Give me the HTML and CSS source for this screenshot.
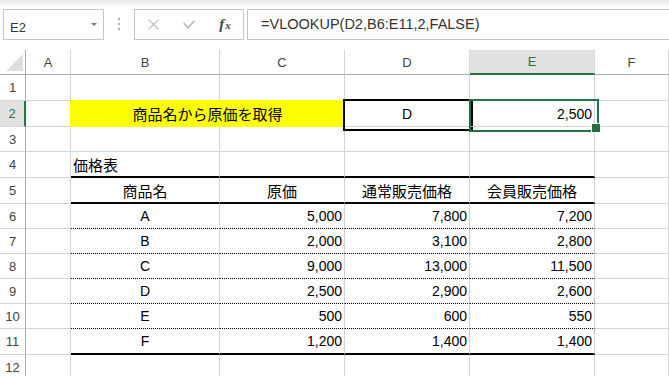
FILE: index.html
```html
<!DOCTYPE html>
<html lang="ja">
<head>
    <meta charset="UTF-8">
    <meta name="viewport" content="width=device-width, initial-scale=1.0">
    <title>VLOOKUP - 価格表</title>
    <link rel="stylesheet" href="styles.css">
</head>
<body>
    <div class="formula-bar">
        <div class="name-box">
            <span>E2</span>
            <span class="caret"></span>
        </div>
        <div class="grip">
            <span></span><span></span><span></span>
        </div>
        <div class="fx-buttons">
            <span class="slot">
                <svg width="11" height="11" viewBox="0 0 11 11"><path d="M0.6 0.6 L10.4 10.4 M10.4 0.6 L0.6 10.4" stroke="#bdbdbd" stroke-width="1.3" fill="none"/></svg>
            </span>
            <span class="slot">
                <svg width="12" height="9" viewBox="0 0 12 9"><path d="M0.7 3.2 L5 7.8 L11.4 0.8" stroke="#bdbdbd" stroke-width="1.8" fill="none"/></svg>
            </span>
            <span class="slot fx"><i>f</i><i class="x">x</i></span>
        </div>
        <div class="formula">=VLOOKUP(D2,B6:E11,2,FALSE)</div>
    </div>

    <div class="sheet">
        <div class="row">
            <div class="cell corner">
                <svg width="17" height="17" viewBox="0 0 17 17"><path d="M17 0 L17 17 L0 17 Z" fill="#dfdfdf"/></svg>
            </div>
            <div class="cell col-head">A</div>
            <div class="cell col-head">B</div>
            <div class="cell col-head">C</div>
            <div class="cell col-head">D</div>
            <div class="cell col-head active">E</div>
            <div class="cell col-head">F</div>
        </div>

        <div class="row tall">
            <div class="cell row-head">1</div>
            <div class="cell"></div><div class="cell"></div><div class="cell"></div>
            <div class="cell"></div><div class="cell"></div><div class="cell"></div>
        </div>

        <div class="row tall">
            <div class="cell row-head active">2</div>
            <div class="cell"></div>
            <div class="cell title ja">商品名から原価を取得</div>
            <div class="cell center lookup">D</div>
            <div class="cell num result">2,500</div>
            <div class="cell"></div>
        </div>

        <div class="row">
            <div class="cell row-head">3</div>
            <div class="cell"></div><div class="cell"></div><div class="cell"></div>
            <div class="cell"></div><div class="cell"></div><div class="cell"></div>
        </div>

        <div class="row tall">
            <div class="cell row-head">4</div>
            <div class="cell"></div>
            <div class="cell ja rule">価格表</div>
            <div class="cell rule"></div>
            <div class="cell rule"></div>
            <div class="cell rule"></div>
            <div class="cell"></div>
        </div>

        <div class="row tall">
            <div class="cell row-head">5</div>
            <div class="cell"></div>
            <div class="cell center ja rule">商品名</div>
            <div class="cell center ja rule">原価</div>
            <div class="cell center ja rule">通常販売価格</div>
            <div class="cell center ja rule">会員販売価格</div>
            <div class="cell"></div>
        </div>

        <div class="row">
            <div class="cell row-head">6</div>
            <div class="cell"></div>
            <div class="cell center dotted">A</div>
            <div class="cell num dotted">5,000</div>
            <div class="cell num dotted">7,800</div>
            <div class="cell num dotted">7,200</div>
            <div class="cell"></div>
        </div>

        <div class="row">
            <div class="cell row-head">7</div>
            <div class="cell"></div>
            <div class="cell center dotted">B</div>
            <div class="cell num dotted">2,000</div>
            <div class="cell num dotted">3,100</div>
            <div class="cell num dotted">2,800</div>
            <div class="cell"></div>
        </div>

        <div class="row">
            <div class="cell row-head">8</div>
            <div class="cell"></div>
            <div class="cell center dotted">C</div>
            <div class="cell num dotted">9,000</div>
            <div class="cell num dotted">13,000</div>
            <div class="cell num dotted">11,500</div>
            <div class="cell"></div>
        </div>

        <div class="row">
            <div class="cell row-head">9</div>
            <div class="cell"></div>
            <div class="cell center dotted">D</div>
            <div class="cell num dotted">2,500</div>
            <div class="cell num dotted">2,900</div>
            <div class="cell num dotted">2,600</div>
            <div class="cell"></div>
        </div>

        <div class="row">
            <div class="cell row-head">10</div>
            <div class="cell"></div>
            <div class="cell center dotted">E</div>
            <div class="cell num dotted">500</div>
            <div class="cell num dotted">600</div>
            <div class="cell num dotted">550</div>
            <div class="cell"></div>
        </div>

        <div class="row tall">
            <div class="cell row-head">11</div>
            <div class="cell"></div>
            <div class="cell center rule">F</div>
            <div class="cell num rule">1,200</div>
            <div class="cell num rule">1,400</div>
            <div class="cell num rule">1,400</div>
            <div class="cell"></div>
        </div>

        <div class="row">
            <div class="cell row-head">12</div>
            <div class="cell"></div><div class="cell"></div><div class="cell"></div>
            <div class="cell"></div><div class="cell"></div><div class="cell"></div>
        </div>
    </div>
</body>
</html>
```

FILE: styles.css
```css
/* General */
* {
    margin: 0;
    padding: 0;
    box-sizing: border-box;
}

html,
body {
    width: 669px;
    height: 376px;
    overflow: hidden;
    background: #fff;
}

body {
    font-family: "Liberation Sans", "Noto Sans CJK JP", sans-serif;
    color: #000;
}

/* Formula bar */
.formula-bar {
    display: flex;
    align-items: flex-start;
    height: 50px;
    padding: 9px 0 0 3px;
    background: linear-gradient(#e9e9e9, #fff 8px);
}

.name-box {
    display: flex;
    align-items: flex-start;
    width: 101px;
    height: 31px;
    padding: 10px 6px 0 6px;
    border: 1px solid #c6c6c6;
    background: #fff;
    font-size: 13px;
    color: #333;
}

.name-box .caret {
    margin: 3px 0 0 auto;
    border-left: 3px solid transparent;
    border-right: 3px solid transparent;
    border-top: 3px solid #777;
}

.grip {
    display: flex;
    flex-direction: column;
    align-items: center;
    gap: 3px;
    width: 30px;
    padding-top: 9px;
}

.grip span {
    width: 2px;
    height: 2px;
    background: #a9a9a9;
}

.fx-buttons {
    display: flex;
    align-items: center;
    width: 110px;
    height: 31px;
    border: 1px solid #c6c6c6;
    background: #fff;
}

.fx-buttons .slot {
    display: flex;
    justify-content: center;
    align-items: center;
    width: 36px;
}

.fx {
    font-family: "Liberation Serif", serif;
    color: #444;
    font-size: 15px;
    font-weight: bold;
}

.fx .x {
    font-size: 11px;
    margin-left: 1px;
}

.formula {
    flex: 1;
    height: 31px;
    margin-left: 3px;
    padding-left: 13px;
    border: 1px solid #c6c6c6;
    border-right: none;
    background: #fff;
    font-size: 14.5px;
    line-height: 29px;
    color: #333;
    white-space: nowrap;
}

/* Sheet grid */
.row {
    display: grid;
    grid-template-columns: 26px 45px 149px 125px 125px 125px 74px;
    height: 25px;
}

.row.tall {
    height: 26px;
}

.cell {
    display: flex;
    align-items: center;
    padding: 0 2px;
    border-right: 1px solid #d4d4d4;
    border-bottom: 1px solid #d4d4d4;
    font-size: 14px;
    white-space: nowrap;
}

.center {
    justify-content: center;
}

.num {
    justify-content: flex-end;
}

.ja {
    font-family: "Noto Sans CJK JP", sans-serif;
    font-size: 15px;
}

/* Headers */
.corner {
    align-items: flex-end;
    justify-content: flex-end;
    padding: 0 2px 3px 0;
    border-right-color: #ababab;
    border-bottom-color: #ababab;
}

.col-head {
    justify-content: center;
    font-size: 13px;
    color: #444;
    border-bottom-color: #ababab;
}

.col-head.active {
    background: #e1e1e1;
    color: #217346;
    border-bottom: 2px solid #217346;
}

.row-head {
    justify-content: center;
    font-size: 13px;
    color: #444;
    border-right-color: #ababab;
}

.row-head.active {
    background: #e1e1e1;
    color: #217346;
    border-right: 2px solid #217346;
}

/* Cells with formatting */
.title {
    grid-column: span 2;
    justify-content: center;
    background: #ff0;
    border-bottom-color: #ff0;
    box-shadow: -1px -1px 0 #ff0;
}

.lookup {
    position: relative;
}

.lookup::after {
    content: "";
    position: absolute;
    left: -2px;
    top: -2px;
    width: 126px;
    height: 28px;
    border: 2px solid #000;
}

.result {
    position: relative;
}

.result::before {
    content: "";
    position: absolute;
    left: -1px;
    top: -2px;
    width: 126px;
    height: 29px;
    border: 2px solid #217346;
}

.result::after {
    content: "";
    position: absolute;
    left: 121px;
    top: 22px;
    width: 8px;
    height: 8px;
    background: #217346;
    border: 1px solid #fff;
}

/* Price table borders */
.rule {
    border-bottom: 2px solid #000;
}

.dotted {
    border-bottom: 1px dotted #000;
}
```
